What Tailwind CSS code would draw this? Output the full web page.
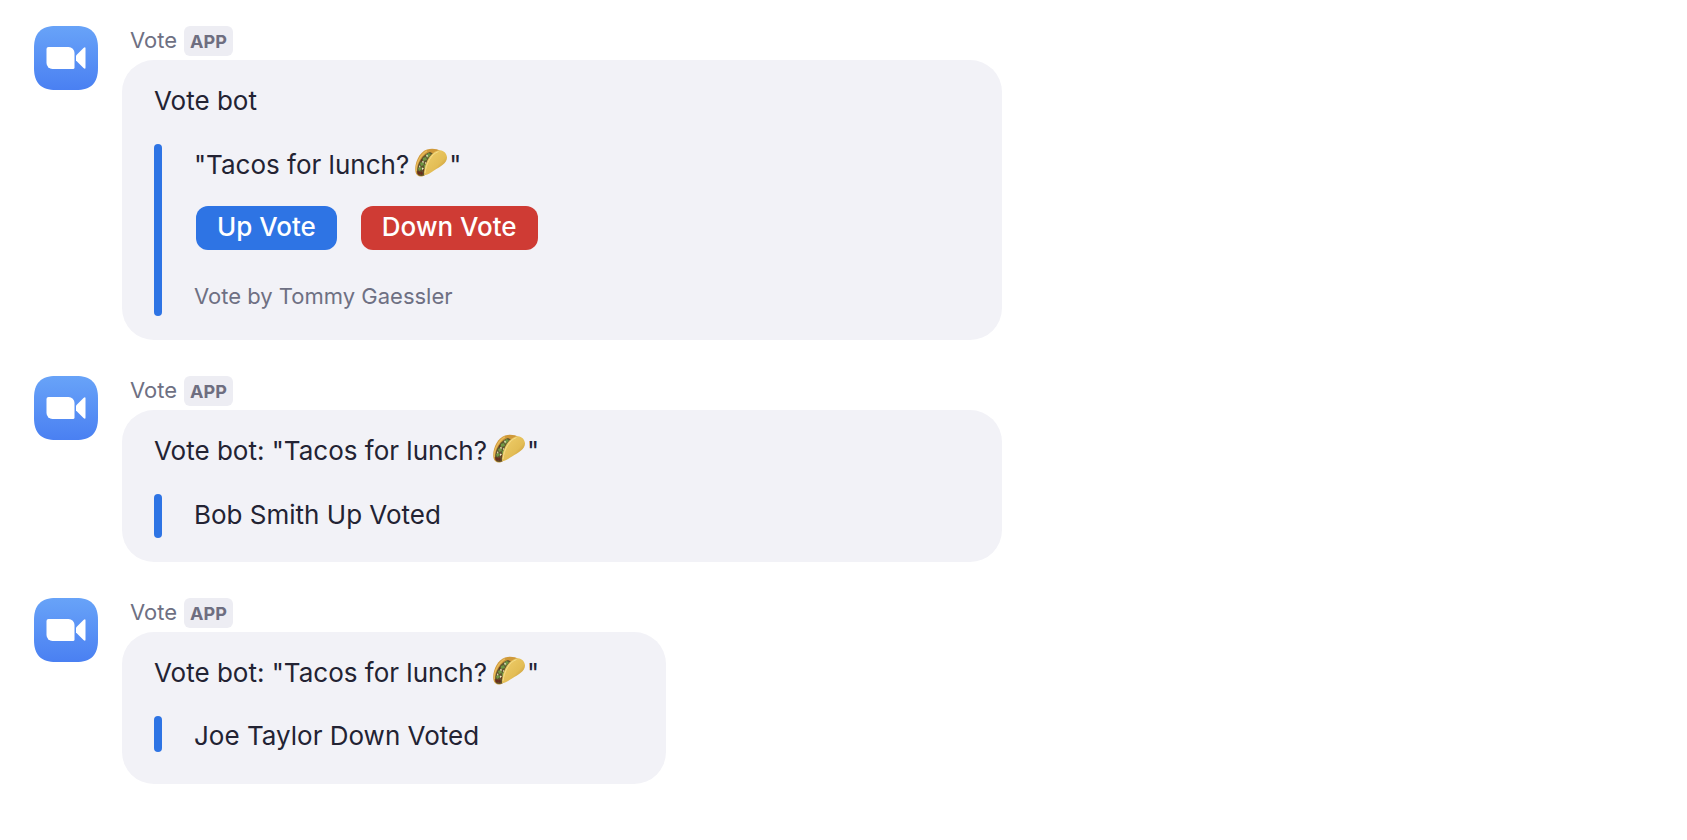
<!DOCTYPE html>
<html lang="en">
<head>
<meta charset="utf-8">
<meta name="viewport" content="width=device-width, initial-scale=1">
<title>Vote bot chat</title>
<script src="https://cdn.jsdelivr.net/npm/@tailwindcss/browser@4"></script>
</head>
<body class="bg-white font-[Inter,'Liberation_Sans',sans-serif] text-[26px] leading-9 text-[#232333]">
<svg class="absolute size-0" aria-hidden="true">
  <defs>
    <linearGradient id="sky" x1="0" y1="0" x2="0" y2="1"><stop offset="0" stop-color="#68a3f8"/><stop offset="1" stop-color="#4a80f2"/></linearGradient>
    <linearGradient id="shell" x1="0" y1="0" x2="1" y2="1"><stop offset="0" stop-color="#efcf6c"/><stop offset=".6" stop-color="#e3bd55"/><stop offset="1" stop-color="#b47d22"/></linearGradient>
    <symbol id="camera" viewBox="0 0 64 64">
      <path d="M22 0h20c15 0 22 7 22 22v20c0 15-7 22-22 22H22C7 64 0 57 0 42V22C0 7 7 0 22 0z" fill="url(#sky)"/>
      <path d="M14.500 21H34.500a6 6 0 0 1 6 6V41.500a1.500 1.500 0 0 1-1.500 1.500H18.500a6 6 0 0 1-6-6V23a2 2 0 0 1 2-2z" fill="#fff"/>
      <path d="M42 29.500L49.500 22Q51.500 20.300 51.500 22.500V41.500Q51.500 43.700 49.500 42L42 34.500z" fill="#fff"/>
    </symbol>
    <symbol id="taco" viewBox="0 0 36 32">
      <path d="M2.500 25C1 17 6 5 14 2.500 19 1 25 2 27 4L12 28C8 31 3.500 29.500 2.500 25z" fill="#cf993a"/>
      <path d="M3.500 24C2.500 17 8 7 14 4" fill="none" stroke="#e7b95b" stroke-width="1.500"/>
      <path d="M4 25C4 16 10 7 17 5l4 2-9 21c-4 2-8 1-8-3z" fill="#60552e"/>
      <path d="M15 6l3 1-3 4-2-2zM10 11l3-1 1 3-4 1zM7 16l3-1 1 3-3 1zM5 21l3-1 1 2-3 2zM11 18l2-1v3l-2 1z" fill="#6f9744"/>
      <path d="M13 7.500l2 1-1 2zM9 14l2 .5-1 2zM12 15l1.500 1-1.500 1zM6 18.500l1.500.5-1 2zM9 20.500l2 1-2 1.500z" fill="#f1e8c4"/>
      <path d="M4.500 24l3 1-1 3-2-1.500zM8 24l2 2-1 2-2-1zM10 22l1.500 1-1 2zM8 12l1 1-1 2z" fill="#6b2d1d"/>
      <path d="M11 28C11 18 16 6 25 3.500c5-1.500 9 3 9 7 0 6-7 9-13 13-4 2.500-7 5-10 4.500z" fill="url(#shell)"/>
      <path d="M12 26C13 17 18 7 25.500 4.500" fill="none" stroke="#f6dd8a" stroke-width="1"/>
    </symbol>
  </defs>
</svg>
<main class="flex flex-col gap-9 pt-[26px] pl-[34px] pr-8 pb-8">

  <article class="flex items-start gap-6">
    <svg class="size-16 shrink-0" role="img" aria-label="Vote app"><use href="#camera"/></svg>
    <div class="min-w-0 grow">
      <header class="mb-1 flex h-[30px] items-start gap-[7px] pl-2">
        <span class="text-[22px] leading-7 text-[#6e7083]">Vote</span>
        <span class="h-[30px] rounded-md bg-[#ededf3] px-[6px] text-lg leading-8 font-bold text-[#6e6e80]">APP</span>
      </header>
      <section class="w-full max-w-[880px] rounded-4xl bg-[#f2f2f7] px-8 pt-[23px] pb-6">
        <h2>Vote bot</h2>
        <div class="mt-[25px] flex gap-8">
          <div class="w-2 shrink-0 rounded-full bg-[#2e74e4]"></div>
          <div class="pt-[3px] pb-[6px]">
            <p class="flex items-center"><span>"Tacos for lunch?</span><svg class="ml-1 mb-1 h-8 w-9" role="img" aria-label="Taco"><use href="#taco"/></svg><span>"</span></p>
            <div class="mt-[23px] flex gap-6 pl-[2px]">
              <button type="button" class="h-11 rounded-xl bg-[#2e74e4] px-[21px] pb-[2px] font-medium text-white">Up Vote</button>
              <button type="button" class="h-11 rounded-xl bg-[#cf3b34] px-[21px] pb-[2px] font-medium text-white">Down Vote</button>
            </div>
            <p class="mt-8 text-[22px] leading-7 text-[#6e7083]">Vote by Tommy Gaessler</p>
          </div>
        </div>
      </section>
    </div>
  </article>

  <article class="flex items-start gap-6">
    <svg class="size-16 shrink-0" role="img" aria-label="Vote app"><use href="#camera"/></svg>
    <div class="min-w-0 grow">
      <header class="mb-1 flex h-[30px] items-start gap-[7px] pl-2">
        <span class="text-[22px] leading-7 text-[#6e7083]">Vote</span>
        <span class="h-[30px] rounded-md bg-[#ededf3] px-[6px] text-lg leading-8 font-bold text-[#6e6e80]">APP</span>
      </header>
      <section class="w-full max-w-[880px] rounded-4xl bg-[#f2f2f7] px-8 pt-[23px] pb-6">
        <h2 class="flex items-center"><span>Vote bot: "Tacos for lunch?</span><svg class="ml-1 mb-1 h-8 w-9" role="img" aria-label="Taco"><use href="#taco"/></svg><span>"</span></h2>
        <div class="mt-[25px] flex gap-8">
          <div class="w-2 shrink-0 rounded-full bg-[#2e74e4]"></div>
          <p class="pt-[3px] pb-[5px]">Bob Smith Up Voted</p>
        </div>
      </section>
    </div>
  </article>

  <article class="flex items-start gap-6">
    <svg class="size-16 shrink-0" role="img" aria-label="Vote app"><use href="#camera"/></svg>
    <div class="min-w-0 grow">
      <header class="mb-1 flex h-[30px] items-start gap-[7px] pl-2">
        <span class="text-[22px] leading-7 text-[#6e7083]">Vote</span>
        <span class="h-[30px] rounded-md bg-[#ededf3] px-[6px] text-lg leading-8 font-bold text-[#6e6e80]">APP</span>
      </header>
      <section class="w-full max-w-[544px] rounded-4xl bg-[#f2f2f7] px-8 pt-[23px] pb-8">
        <h2 class="flex items-center"><span>Vote bot: "Tacos for lunch?</span><svg class="ml-1 mb-1 h-8 w-9" role="img" aria-label="Taco"><use href="#taco"/></svg><span>"</span></h2>
        <div class="mt-[25px] flex gap-8">
          <div class="w-2 shrink-0 rounded-full bg-[#2e74e4]"></div>
          <p class="pt-1 leading-8">Joe Taylor Down Voted</p>
        </div>
      </section>
    </div>
  </article>

</main>
</body>
</html>
